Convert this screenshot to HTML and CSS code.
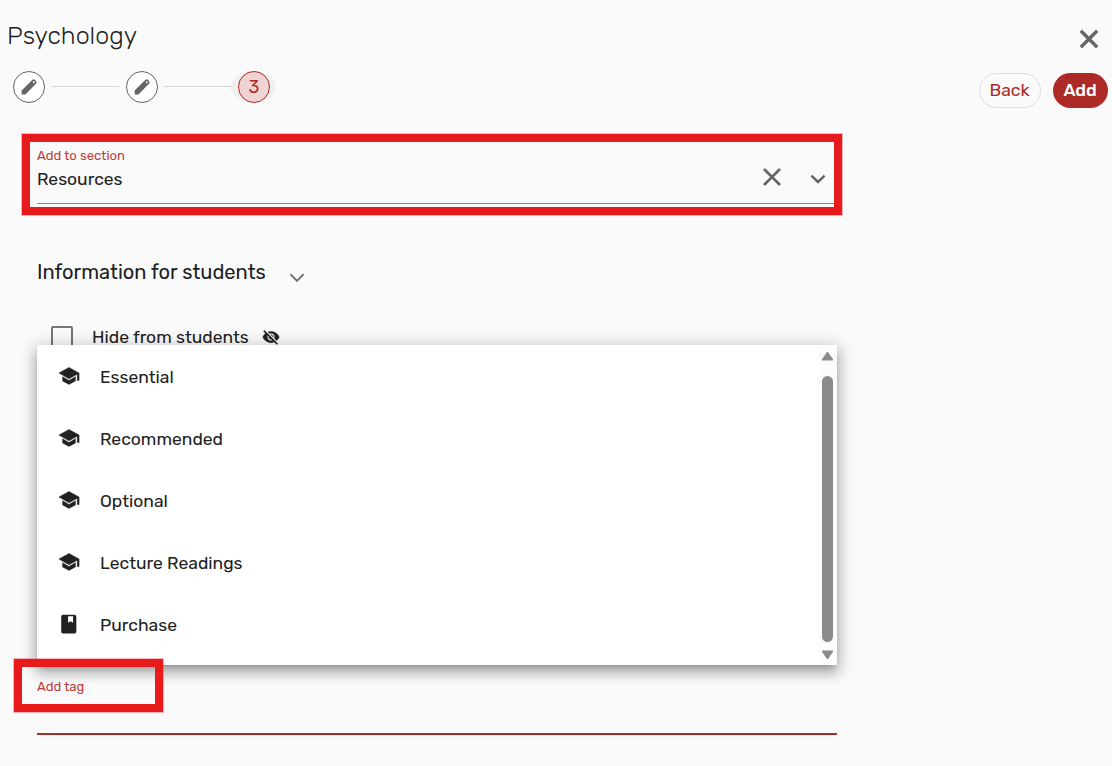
FILE: index.html
```html
<!DOCTYPE html>
<html lang="en">
<head>
    <meta charset="UTF-8">
    <meta name="viewport" content="width=device-width, initial-scale=1.0">
    <title>Psychology</title>
    <link rel="stylesheet" href="styles.css">
</head>
<body>
    <header class="header">
        <div class="header-left">
            <h1 class="title">Psychology</h1>
            <div class="stepper">
                <span class="step">
                    <svg width="20" height="20" viewBox="0 0 20 20"><path d="M2.600 17.400v-3.800L13.200 3a2 2 0 0 1 2.800 0l1 1a2 2 0 0 1 0 2.800L6.400 17.400z" fill="#666"/><path d="M13.700 5.100l1.100-1 1.200 1.200-1.100 1.100z" fill="#fff"/></svg>
                </span>
                <span class="step-line"></span>
                <span class="step">
                    <svg width="20" height="20" viewBox="0 0 20 20"><path d="M2.600 17.400v-3.800L13.200 3a2 2 0 0 1 2.800 0l1 1a2 2 0 0 1 0 2.800L6.400 17.400z" fill="#666"/><path d="M13.700 5.100l1.100-1 1.200 1.200-1.100 1.100z" fill="#fff"/></svg>
                </span>
                <span class="step-line last"></span>
                <span class="step-halo"><span class="step active">3</span></span>
            </div>
        </div>
        <div class="header-right">
            <button class="close" aria-label="Close">
                <svg width="20" height="20" viewBox="0 0 20 20"><path d="M1.800 1.800l16.400 16.400M18.200 1.800L1.800 18.200" stroke="#666" stroke-width="3.400"/></svg>
            </button>
            <div class="actions">
                <button class="btn">Back</button>
                <button class="btn primary">Add</button>
            </div>
        </div>
    </header>

    <main class="content">
        <div class="section-field highlight">
            <div class="field">
                <div class="field-text">
                    <label class="label">Add to section</label>
                    <div class="value">Resources</div>
                </div>
                <svg class="clear" width="20" height="20" viewBox="0 0 20 20"><path d="M2 2l16 16M18 2L2 18" stroke="#666" stroke-width="2.600"/></svg>
                <svg class="arrow" width="16" height="10" viewBox="0 0 16 10"><path d="M1.400 1.600L8 8l6.600-6.400" fill="none" stroke="#666" stroke-width="2.500"/></svg>
            </div>
        </div>

        <div class="info">
            <h2 class="info-title">Information for students</h2>
            <svg class="info-arrow" width="16" height="10" viewBox="0 0 16 10"><path d="M1.400 1.200L8 8l6.600-6.800" fill="none" stroke="#707070" stroke-width="1.900"/></svg>
        </div>

        <div class="hide-row">
            <span class="checkbox"></span>
            <span class="hide-label">Hide from students</span>
            <svg width="18" height="18" viewBox="0 0 24 24"><path d="M12 7c2.760 0 5 2.240 5 5 0 .650-.130 1.260-.360 1.830l2.920 2.920c1.510-1.260 2.700-2.890 3.430-4.750-1.730-4.390-6-7.500-11-7.500-1.400 0-2.740.250-3.980.700l2.160 2.160C10.740 7.130 11.350 7 12 7zM2 4.270l2.280 2.280.460.460C3.080 8.300 1.780 10.020 1 12c1.730 4.390 6 7.500 11 7.500 1.550 0 3.030-.300 4.380-.840l.420.420L19.730 22 21 20.730 3.270 3 2 4.270zM7.530 9.800l1.550 1.550c-.050.210-.080.430-.080.650 0 1.660 1.340 3 3 3 .220 0 .440-.030.650-.080l1.550 1.550c-.670.330-1.410.530-2.200.530-2.760 0-5-2.240-5-5 0-.790.200-1.530.530-2.200zm4.310-.780l3.150 3.150.020-.160c0-1.660-1.340-3-3-3l-.170.010z" fill="#212121" stroke="#212121" stroke-width=".5"/></svg>
        </div>

        <div class="tag-field">
            <label class="label">Add tag</label>

            <div class="dropdown">
                <ul class="options">
                    <li class="option">
                        <svg width="22" height="22" viewBox="0 0 24 24"><use href="#cap"/></svg>
                        <span>Essential</span>
                    </li>
                    <li class="option">
                        <svg width="22" height="22" viewBox="0 0 24 24"><use href="#cap"/></svg>
                        <span>Recommended</span>
                    </li>
                    <li class="option">
                        <svg width="22" height="22" viewBox="0 0 24 24"><use href="#cap"/></svg>
                        <span>Optional</span>
                    </li>
                    <li class="option">
                        <svg width="22" height="22" viewBox="0 0 24 24"><use href="#cap"/></svg>
                        <span>Lecture Readings</span>
                    </li>
                    <li class="option">
                        <svg width="22" height="22" viewBox="0 0 24 24"><path d="M5.500 1.800h12.500a2 2 0 0 1 2 2v16.600a2 2 0 0 1-2 2h-12.500a2 2 0 0 1-2-2V3.800a2 2 0 0 1 2-2zM11 3.600v7l2.700-1.700 2.700 1.700v-7z" fill="#212121" fill-rule="evenodd"/></svg>
                        <span>Purchase</span>
                    </li>
                </ul>
                <div class="scrollbar">
                    <svg width="13" height="10" viewBox="0 0 13 10"><path d="M6.500 1L12 9H1z" fill="#8b8b8b" stroke="#8b8b8b" stroke-linejoin="round"/></svg>
                    <span class="thumb"></span>
                    <svg width="13" height="10" viewBox="0 0 13 10"><path d="M6.500 9L12 1H1z" fill="#8b8b8b" stroke="#8b8b8b" stroke-linejoin="round"/></svg>
                </div>
            </div>

            <span class="tag-highlight highlight"></span>
        </div>
    </main>

    <svg class="defs">
        <symbol id="cap" viewBox="0 0 24 24"><path d="M5 12.800v4.600L12 21.200l7-3.800v-4.600L12 16.800l-7-4zM12 2.600L1 8.800l11 6.200 9-4.910V17h2V8.800L12 2.600z" fill="#212121" stroke="#212121" stroke-width=".5"/></symbol>
    </svg>
</body>
</html>
```
FILE: styles.css
```css
* {
    margin: 0;
    padding: 0;
    box-sizing: border-box;
}

body {
    font-family: Rubik, Roboto, sans-serif;
    background-color: #fafafa;
    color: #212121;
    height: 766px;
    overflow: hidden;
}

svg {
    flex: none;
}

button {
    font-family: inherit;
    cursor: pointer;
}

.header {
    display: flex;
    justify-content: space-between;
    height: 134px;
    padding: 20px 4px 0 7px;
}

.title {
    font-size: 25px;
    font-weight: 300;
    line-height: 32px;
}

.stepper {
    display: flex;
    align-items: center;
    padding: 19px 0 0 6px;
}

.step {
    display: flex;
    align-items: center;
    justify-content: center;
    width: 32px;
    height: 32px;
    border: 1px solid #666;
    border-radius: 50%;
    background-color: #fff;
}

.step.active {
    border-color: #b52b27;
    background-color: #f0d4d4;
    color: #ad2b27;
    font-size: 18px;
}

.step-halo {
    margin-left: -8px;
    padding: 0 6px 0 7px;
    border-radius: 50%;
    background-color: #f0f0f0;
}

.step-line {
    width: 67px;
    height: 1px;
    margin: 0 7px;
    background-color: #d8d8d8;
    transform: translateY(-1px);
}

.step-line.last {
    width: 68px;
    margin-left: 6px;
}

.header-right {
    display: flex;
    flex-direction: column;
    align-items: flex-end;
    padding-top: 9px;
}

.close {
    width: 20px;
    height: 20px;
    margin-right: 9px;
    border: none;
    background: none;
}

.actions {
    display: flex;
    gap: 12px;
    margin-top: 24px;
}

.btn {
    width: 62px;
    height: 35px;
    padding: 0 1px 2px 0;
    border: 1px solid #ddd;
    border-radius: 18px;
    background-color: #fafafa;
    color: #ad2b27;
    font-size: 17.5px;
}

.btn.primary {
    width: 55px;
    border: none;
    background-color: #ad2b27;
    color: #fff;
    font-weight: 500;
    letter-spacing: -0.2px;
}

.content {
    width: 800px;
    margin-left: 37px;
}

.highlight {
    border: 8px solid #e71b1b;
    outline: 1px solid rgba(231, 27, 27, 0.3);
}

.section-field {
    width: 820px;
    height: 81px;
    margin-left: -15px;
    padding-left: 7px;
}

.field {
    display: flex;
    height: 62px;
    padding: 6px 8px 0 0;
    border-bottom: 1px solid #8a8a8a;
}

.field-text {
    flex: 1;
}

.label {
    display: block;
    color: #bd3d3a;
    font-size: 13.1px;
    line-height: 16px;
}

.value {
    margin-top: 5px;
    font-size: 17.5px;
    line-height: 20px;
}

.clear {
    margin: 19px 28px 0 0;
}

.arrow {
    margin-top: 26px;
}

.info {
    display: flex;
    height: 111px;
    padding-top: 45px;
}

.info-title {
    font-size: 20.1px;
    font-weight: 400;
    line-height: 24px;
}

.info-arrow {
    margin: 13px 0 0 23px;
}

.hide-row {
    display: flex;
    align-items: center;
    height: 22px;
    padding-left: 14px;
}

.checkbox {
    width: 22px;
    height: 22px;
    margin-right: 19px;
    border: 2px solid #757575;
    border-radius: 2px;
}

.hide-label {
    width: 170px;
    font-size: 17.5px;
}

.tag-field {
    position: relative;
    height: 387px;
    padding-top: 331px;
    border-bottom: 2px solid #ad2b27;
}

.tag-highlight {
    position: absolute;
    left: -23px;
    top: 311px;
    width: 149px;
    height: 53px;
}

/* options list opens above the tag input */
.dropdown {
    position: absolute;
    left: 0;
    top: -3px;
    display: flex;
    width: 800px;
    height: 320px;
    background-color: #fff;
    border-radius: 4px 0 0 0;
    box-shadow: 0 5px 6px -3px rgba(0, 0, 0, 0.2), 0 9px 12px 1px rgba(0, 0, 0, 0.14), 0 3px 16px 3px rgba(0, 0, 0, 0.2);
}

.options {
    flex: 1;
    list-style: none;
    padding-top: 1px;
}

.option {
    display: flex;
    align-items: center;
    height: 62px;
    padding-left: 21px;
    gap: 20px;
    font-size: 17.5px;
}

.option svg {
    margin-bottom: 2px;
}

.scrollbar {
    display: flex;
    flex-direction: column;
    align-items: center;
    width: 19px;
    padding: 6px 0 5px;
    background-color: #fcfcfc;
}

.thumb {
    flex: 1;
    width: 11px;
    margin: 15px 0 8px;
    border-radius: 6px;
    background-color: #8b8b8b;
}

.defs {
    display: none;
}
```
